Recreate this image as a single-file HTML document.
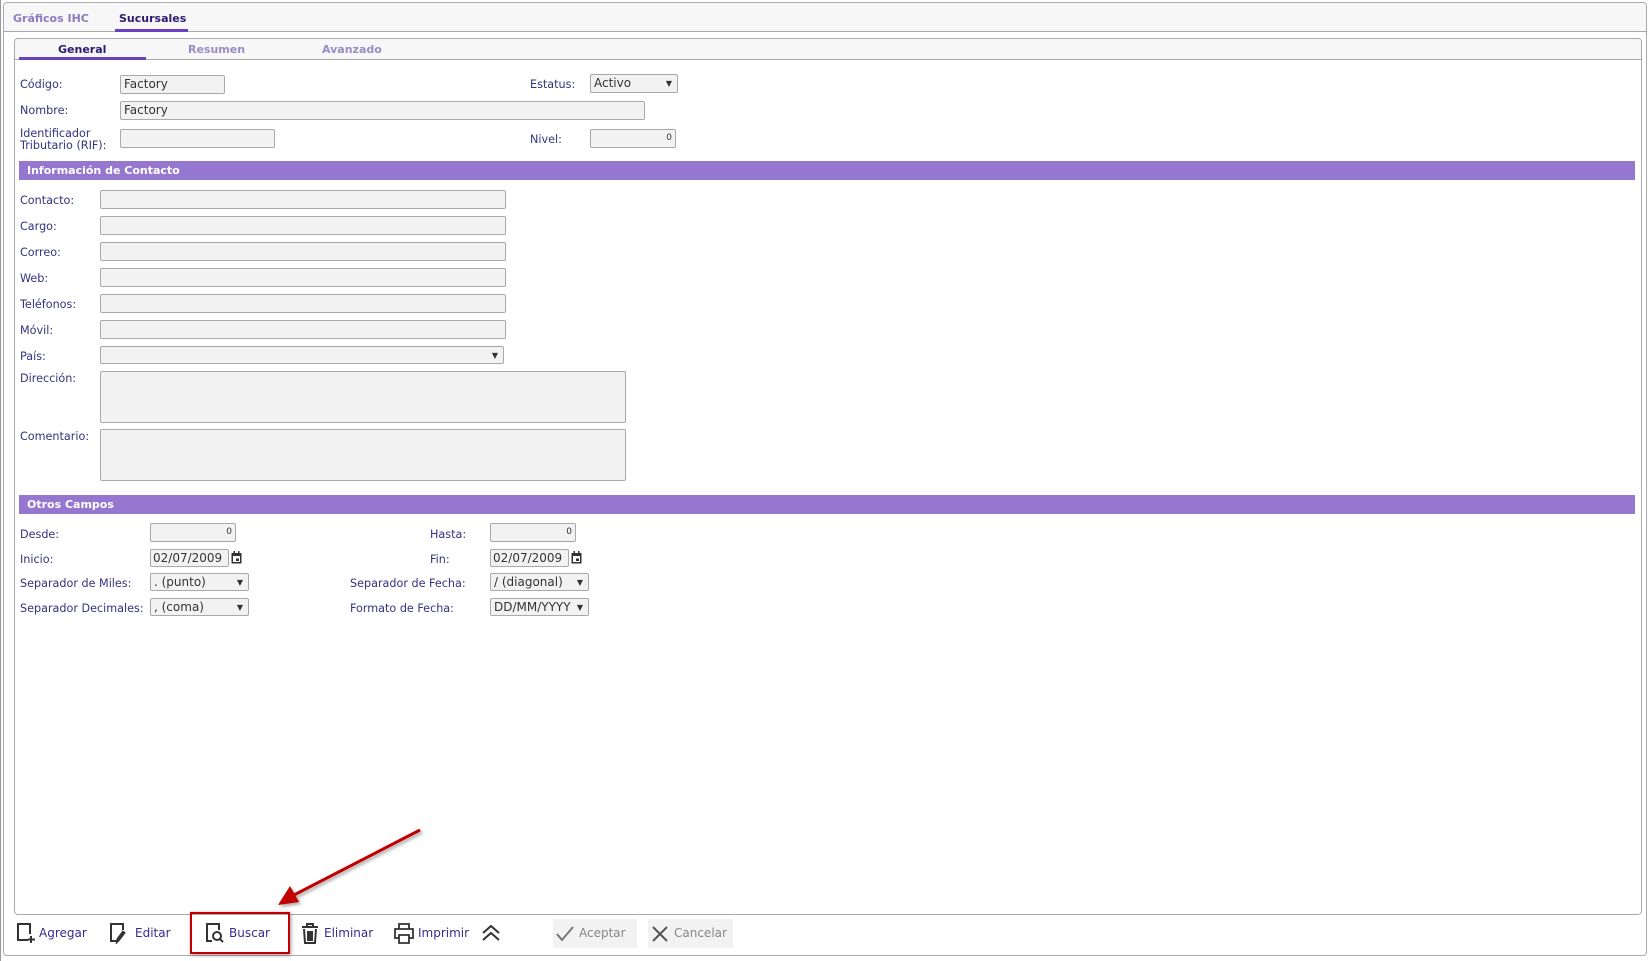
<!DOCTYPE html>
<html><head><meta charset="utf-8"><style>
*{box-sizing:border-box;margin:0;padding:0}
body{width:1648px;height:961px;background:#fff;position:relative;overflow:hidden;font-family:"DejaVu Sans",Verdana,sans-serif;font-size:11.2px;color:#2b2b7a}
.a{position:absolute}
.l{position:absolute;color:#33337f;white-space:nowrap;line-height:12px}
.i{position:absolute;background:#f2f2f2;border:1px solid #a9a9a9;border-radius:2px;font-size:12px;color:#333;padding-left:3px;line-height:17px;font-family:"DejaVu Sans",sans-serif}
.n{text-align:right;padding-right:3px;font-size:9px}
.s:after{content:"▼";position:absolute;right:5px;top:0;font-size:8px;color:#333}
.bar{position:absolute;left:19px;width:1616px;height:19px;background:#9677cf;color:#fff;font-weight:bold;font-size:11px;padding-left:8px;line-height:19px}
.tb{position:absolute;top:926px;font-size:12px;color:#3a2a8f;line-height:15px}
svg{position:absolute}
</style></head><body>
<div class="a" style="left:3px;top:2px;width:1644px;height:954px;border:1px solid #aaa;border-radius:4px"></div>
<div class="a" style="left:4px;top:3px;width:1642px;height:29px;background:#f7f7f7;border-bottom:1px solid #aaa;border-radius:4px 4px 0 0"></div>
<div class="a" style="left:0;top:0;width:1px;height:961px;background:#999"></div>
<div class="a" style="left:13px;top:12px;font-weight:bold;font-size:11px;color:#8e7ac0">Gráficos IHC</div>
<div class="a" style="left:119px;top:12px;font-weight:bold;font-size:11px;color:#2a1a70">Sucursales</div>
<div class="a" style="left:115px;top:29px;width:73px;height:3px;background:#6a3fc0"></div>

<div class="a" style="left:14px;top:38px;width:1628px;height:877px;border:1px solid #aaa;border-radius:4px;background:#fff"></div>
<div class="a" style="left:15px;top:39px;width:1626px;height:21px;background:#f7f7f7;border-bottom:1px solid #aaa;border-radius:4px 4px 0 0"></div>
<div class="a" style="left:58px;top:43px;font-weight:bold;font-size:11px;color:#2a1a70">General</div>
<div class="a" style="left:188px;top:43px;font-weight:bold;font-size:11px;color:#9a8cc4">Resumen</div>
<div class="a" style="left:322px;top:43px;font-weight:bold;font-size:11px;color:#9a8cc4">Avanzado</div>
<div class="a" style="left:19px;top:57px;width:127px;height:3px;background:#6a3fc0"></div>

<div class="l" style="left:20px;top:79px">Código:</div>
<div class="i" style="left:120px;top:75px;width:105px;height:19px">Factory</div>
<div class="l" style="left:530px;top:79px">Estatus:</div>
<div class="i s" style="left:590px;top:74px;width:88px;height:19px">Activo</div>
<div class="l" style="left:20px;top:105px">Nombre:</div>
<div class="i" style="left:120px;top:101px;width:525px;height:19px">Factory</div>
<div class="l" style="left:20px;top:128px">Identificador<br>Tributario (RIF):</div>
<div class="i" style="left:120px;top:129px;width:155px;height:19px"></div>
<div class="l" style="left:530px;top:134px">Nivel:</div>
<div class="i n" style="left:590px;top:129px;width:86px;height:19px">0</div>

<div class="bar" style="top:161px">Información de Contacto</div>
<div class="l" style="left:20px;top:195px">Contacto:</div><div class="i" style="left:100px;top:190px;width:406px;height:19px"></div>
<div class="l" style="left:20px;top:221px">Cargo:</div><div class="i" style="left:100px;top:216px;width:406px;height:19px"></div>
<div class="l" style="left:20px;top:247px">Correo:</div><div class="i" style="left:100px;top:242px;width:406px;height:19px"></div>
<div class="l" style="left:20px;top:273px">Web:</div><div class="i" style="left:100px;top:268px;width:406px;height:19px"></div>
<div class="l" style="left:20px;top:299px">Teléfonos:</div><div class="i" style="left:100px;top:294px;width:406px;height:19px"></div>
<div class="l" style="left:20px;top:325px">Móvil:</div><div class="i" style="left:100px;top:320px;width:406px;height:19px"></div>
<div class="l" style="left:20px;top:351px">País:</div><div class="i s" style="left:100px;top:346px;width:404px;height:18px"></div>
<div class="l" style="left:20px;top:373px">Dirección:</div><div class="i" style="left:100px;top:371px;width:526px;height:52px"></div>
<div class="l" style="left:20px;top:431px">Comentario:</div><div class="i" style="left:100px;top:429px;width:526px;height:52px"></div>

<div class="bar" style="top:495px">Otros Campos</div>
<div class="l" style="left:20px;top:529px">Desde:</div><div class="i n" style="left:150px;top:523px;width:86px;height:19px">0</div>
<div class="l" style="left:430px;top:529px">Hasta:</div><div class="i n" style="left:490px;top:523px;width:86px;height:19px">0</div>
<div class="l" style="left:20px;top:554px">Inicio:</div><div class="i" style="left:150px;top:549px;width:79px;height:18px;padding-left:2px">02/07/2009</div>
<svg style="left:231px;top:551px" width="11" height="13" viewBox="0 0 11 13"><rect x="0.5" y="2" width="10" height="10.5" fill="#333"/><rect x="2" y="5" width="7" height="6" fill="#fff"/><rect x="5" y="7.5" width="3" height="2.5" fill="#333"/><rect x="2.5" y="0" width="1.5" height="3" fill="#333"/><rect x="7" y="0" width="1.5" height="3" fill="#333"/></svg>
<div class="l" style="left:430px;top:554px">Fin:</div><div class="i" style="left:490px;top:549px;width:79px;height:18px;padding-left:2px">02/07/2009</div>
<svg style="left:571px;top:551px" width="11" height="13" viewBox="0 0 11 13"><rect x="0.5" y="2" width="10" height="10.5" fill="#333"/><rect x="2" y="5" width="7" height="6" fill="#fff"/><rect x="5" y="7.5" width="3" height="2.5" fill="#333"/><rect x="2.5" y="0" width="1.5" height="3" fill="#333"/><rect x="7" y="0" width="1.5" height="3" fill="#333"/></svg>
<div class="l" style="left:20px;top:578px">Separador de Miles:</div><div class="i s" style="left:150px;top:573px;width:99px;height:18px">. (punto)</div>
<div class="l" style="left:350px;top:578px">Separador de Fecha:</div><div class="i s" style="left:490px;top:573px;width:99px;height:18px">/ (diagonal)</div>
<div class="l" style="left:20px;top:603px">Separador Decimales:</div><div class="i s" style="left:150px;top:598px;width:99px;height:18px">, (coma)</div>
<div class="l" style="left:350px;top:603px">Formato de Fecha:</div><div class="i s" style="left:490px;top:598px;width:99px;height:18px;overflow:hidden">DD/MM/YYYY</div>

<!-- toolbar -->
<svg style="left:16px;top:923px" width="20" height="21" viewBox="0 0 20 21" fill="none" stroke="#333" stroke-width="2"><path d="M12 17H2V1h12v10"/><path d="M15 13v7M12 16.5h7"/></svg>
<div class="tb" style="left:39px">Agregar</div>
<svg style="left:109px;top:923px" width="20" height="21" viewBox="0 0 20 21" fill="none" stroke="#333" stroke-width="2"><path d="M8 18H2V1h12v6"/><path d="M16 9l-6 8-2 2 0.5-3 6-8"/></svg>
<div class="tb" style="left:135px">Editar</div>
<div class="a" style="left:190px;top:912px;width:100px;height:42px;border:2px solid #c00000;box-shadow:1px 1px 4px rgba(0,0,0,.4)"></div>
<svg style="left:205px;top:923px" width="20" height="21" viewBox="0 0 20 21" fill="none" stroke="#333" stroke-width="2"><path d="M7 18H2V1h12v6"/><circle cx="12" cy="13" r="4"/><path d="M15 16l3 3"/></svg>
<div class="tb" style="left:229px">Buscar</div>
<svg style="left:301px;top:923px" width="18" height="21" viewBox="0 0 18 21" fill="none" stroke="#333" stroke-width="2"><path d="M1 4h16M6 4V1h6v3M3 6l1 14h10l1-14M7 8v10M9 8v10M11 8v10"/></svg>
<div class="tb" style="left:324px">Eliminar</div>
<svg style="left:394px;top:923px" width="20" height="21" viewBox="0 0 20 21" fill="none" stroke="#333" stroke-width="1.8"><path d="M5 6V1h10v5M5 15H1V6h18v9h-4M5 12h10v8H5z"/></svg>
<div class="tb" style="left:418px">Imprimir</div>
<svg style="left:481px;top:924px" width="20" height="18" viewBox="0 0 20 18" fill="none" stroke="#333" stroke-width="2"><path d="M2 9l8-7 8 7M2 16l8-7 8 7"/></svg>
<div class="a" style="left:553px;top:919px;width:84px;height:29px;background:#f2f2f2"></div>
<svg style="left:556px;top:926px" width="18" height="16" viewBox="0 0 18 16" fill="none" stroke="#777" stroke-width="2"><path d="M1 8l5 6L17 1"/></svg>
<div class="tb" style="left:579px;color:#888">Aceptar</div>
<div class="a" style="left:648px;top:919px;width:85px;height:29px;background:#f2f2f2"></div>
<svg style="left:652px;top:926px" width="16" height="16" viewBox="0 0 16 16" fill="none" stroke="#555" stroke-width="2"><path d="M1 1l14 14M15 1L1 15"/></svg>
<div class="tb" style="left:674px;color:#888">Cancelar</div>

<!-- arrow -->
<svg style="left:0;top:0" width="1648" height="961"><defs><filter id="sh"><feDropShadow dx="2" dy="2" stdDeviation="1.5" flood-opacity="0.35"/></filter></defs>
<g filter="url(#sh)"><line x1="420" y1="830" x2="292" y2="896" stroke="#c00000" stroke-width="3"/><polygon points="278,905 290,886 299,902" fill="#c00000"/></g></svg>
</body></html>
